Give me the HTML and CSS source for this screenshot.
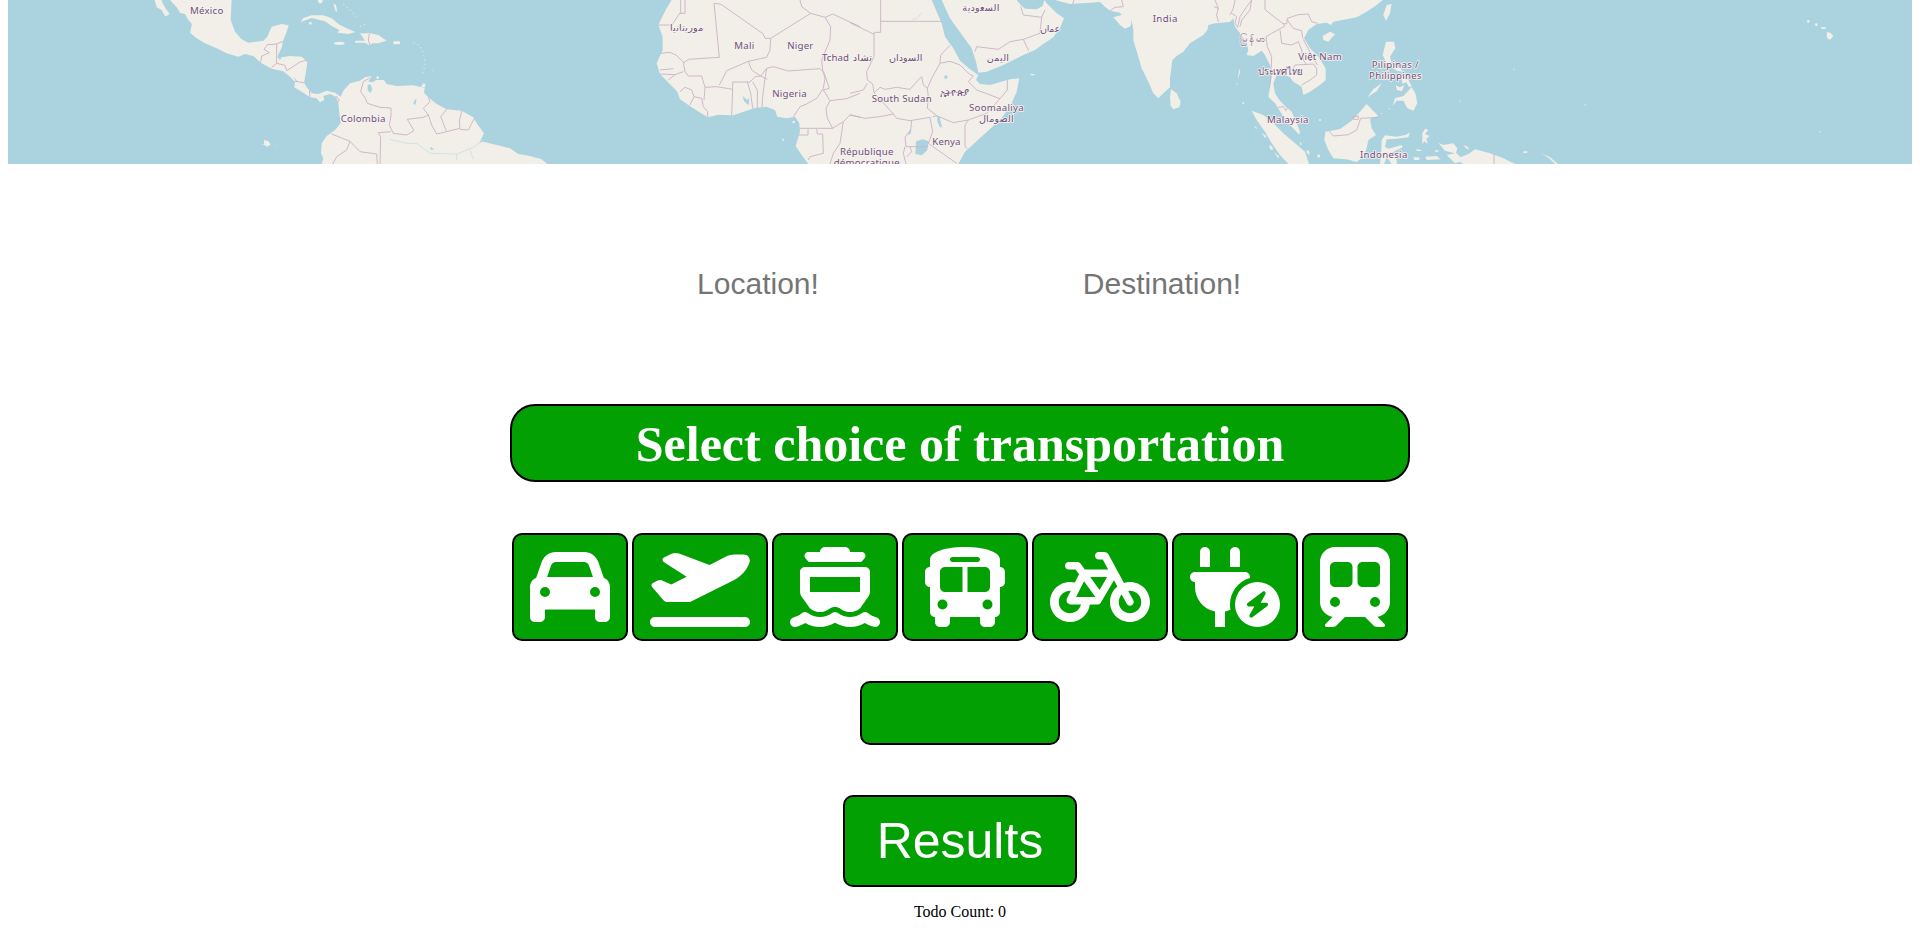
FILE: index.html
```
<!DOCTYPE html>
<html lang="en">
<head>
<meta charset="utf-8">
<title>Trip planner</title>
<link rel="stylesheet" href="styles.css">
</head>
<body>
<svg class="map" viewBox="24 0 5712 492" role="img" aria-label="World map">
  <!-- land masses -->
  <g class="land">
    <g transform="translate(390 0)">
      <path d="M74 0L80 22 95 30 105 48 115 46 118 40 110 30 98 10 95 0Z"/>
      <path d="M120 0L140 22 150 38 165 42 175 60 186 72 180 98 200 115 225 130 260 145 290 160 325 170 345 162 370 168 392 188 425 206 460 214 480 230 495 246 493 262 520 278 540 292 560 295 570 307 583 300 580 288 600 282 618 290 625 310 628 340 632 370 615 390 590 408 575 430 573 460 580 475 575 492H1252L1235 478 1200 468 1165 462 1140 445 1100 435 1060 425 1048 428 1062 400 1040 370 1030 352 995 332 950 328 920 312 895 292 882 278 884 264 850 256 800 258 770 252 762 240 738 240 730 246 715 245 724 228 705 232 690 242 660 250 640 272 632 290 615 278 590 272 565 282 545 280 530 262 522 248 528 215 532 185 515 170 480 168 455 172 450 180 442 170 456 140 458 125 470 95 476 76 455 72 425 80 412 110 400 122 355 128 335 118 315 95 302 60 305 0Z"/>
      <path d="M512 66L520 54 545 46 580 46 605 55 625 72 650 85 676 96 655 102 622 98 628 90 605 78 585 64 560 58 545 54Z"/>
      <path d="M690 100L720 100 745 105 770 122 745 130 728 130 718 136 705 128 675 128 675 122 705 122Z"/>
      <ellipse cx="628" cy="130" rx="16" ry="5"/><rect x="790" y="124" width="20" height="9" rx="3"/>
      <path d="M563 0h16l-4 10h-8zM610 10l8 6 4 20-6-4zM402 420l14 4 6 10-12 6-8-6zM880 250l6 2v10h-14z"/>
      <circle cx="541" cy="70" r="4"/><circle cx="743" cy="233" r="4"/><circle cx="398" cy="433" r="2"/>
      <path class="chain" d="M640 12L660 30 680 50M690 80L715 68M850 128L870 138 880 160 886 190 878 225M908 210v2M436 434v2"/>
    </g>
    <g transform="translate(1920 0)">
      <path d="M95 0L78 28 62 60 55 75 68 110 68 150 55 178 50 190 60 222 80 242 112 275 120 298 155 322 203 352 235 344 280 346 320 332 345 324 380 320 405 330 412 350 440 355 465 350 478 370 480 395 467 438 485 465 505 492H955L975 455 1030 405 1080 360 1110 320 1130 275 1138 235 1110 238 1050 255 1020 252 1008 240 1015 225 990 208 960 182 940 145 915 110 905 70 875 0Z"/>
      <circle cx="430" cy="419" r="3"/><circle cx="461" cy="366" r="4"/>
    </g>
    <g transform="translate(2550 0)">
      <path d="M275 0L300 55 340 110 365 145 378 185 385 218 410 215 460 195 520 165 555 150 580 132 610 112 632 80 642 55 620 40 605 25 590 10 583 0 578 18 560 28 525 26 512 15 500 0Z"/>
      <path d="M540 221l16 2-10 4z"/>
    </g>
    <g transform="translate(3210 0)">
      <path d="M-45 0L0 12 60 8 90 6 105 20 120 32 150 38 155 45 130 52 150 75 165 86 182 78 185 60 190 90 190 120 205 170 215 205 235 245 250 280 265 295 280 280 300 262 300 235 307 180 320 168 340 155 360 130 400 105 412 90 415 75 435 70 480 66 490 55 495 80 510 100 530 130 535 150 530 165 550 168 575 152 585 165 600 195 605 230 600 260 595 290 615 310 625 325 640 350 665 380 688 404 690 395 680 370 665 335 645 318 628 300 615 280 610 250 620 225 640 222 660 232 670 245 695 260 700 285 720 275 750 255 767 240 767 205 745 170 720 145 702 115 715 90 740 72 770 68 783 75 790 65 860 52 890 35 920 15 938 0Z"/>
      <path d="M303 268L320 280 332 305 328 322 310 328 302 318 300 290Z"/>
      <path d="M552 378l10 6-4 2zM575 398l14 10-4 6zM598 435l10 6 0 10-8-4zM612 456l16 14-4 4zM508 205l2 12-7 24z"/>
      <circle cx="520" cy="310" r="3"/><circle cx="500" cy="252" r="2"/>
    </g>
    <g transform="translate(3690 0)">
      <path d="M65 332L100 345 130 370 160 400 195 430 225 455 237 492H175L150 465 125 430 105 395 80 360Z"/>
      <path d="M297 394L330 387 365 362 390 335 410 312 445 348 420 356 425 385 438 405 415 420 410 445 400 470 380 486 350 478 310 475 295 450 283 420 286 395Z"/>
      <path d="M455 420L465 406 500 410 525 405 540 398 535 412 500 416 470 418 465 440 475 446 515 435 518 442 485 458 500 480 500 492H485L470 470 462 492H450L453 465Z"/>
      <path d="M468 125L492 125 496 145 480 170 485 190 510 205 520 215 500 212 470 190 458 165Z"/>
      <path d="M488 318L495 295 520 288 545 262 556 280 562 310 550 332 532 325 520 302 500 302Z"/>
      <path d="M412 292L430 268 455 250 440 274ZM515 235l20 4 10 20-8 2-8-14-12 4zM497 256l12 6 14-6-8 18-14-4zM470 15L485 12 480 40 468 62 460 45Z"/>
      <path d="M278 108L300 95 315 103 295 125 280 120ZM577 400l8-14 10 4-10 12 14 6-10 8 4 16-10-8-6 8zM550 472l18 0 0 8-16 0zM585 470l36-2 10 10-40 2zM230 450l8 4 0 12-8-8zM262 464h8v8h-8zM210 425l6 8-6 2zM560 448l14 2v3h-14z"/>
      <circle cx="270" cy="360" r="3"/><circle cx="478" cy="326" r="2"/><circle cx="455" cy="340" r="2"/>
    </g>
    <g transform="translate(4200 0)">
      <path d="M115 428L130 435 160 430 172 445 168 458 182 472 205 462 225 448 270 460 310 475 345 492H190L180 485 165 490 150 475 140 465 165 460 135 452Z"/>
      <path d="M424 460L450 472 474 492H466L446 474ZM190 435l14 6 4 8-10-4zM370 454h12v5h-12zM105 451h10v4h-10zM1281 96l10 2 9 10-8 10h-8l-4-10z"/>
      <circle cx="1225" cy="64" r="4"/><circle cx="1249" cy="74" r="4"/><ellipse cx="1270" cy="84" rx="8" ry="3"/>
      <circle cx="342" cy="208" r="2"/><circle cx="179" cy="303" r="2"/><circle cx="1259" cy="395" r="2"/><circle cx="556" cy="314" r="2"/>
    </g>
  </g>

  <!-- lakes and rivers -->
  <g class="lake">
    <path d="M1103 255l8-2 6 14-6 12-8-8zM1244 300l6-4-4 18-6-2zM1294 440l8 10-12-2z"/>
    <path d="M2748 424l20-6 18 6-4 26-16 16-20-4zM2812 350l6 0 8 32-6 0-8-18zM2832 228l9-2 2 8-8 4zM2728 392l6-4-2 14-8 2zM2228 288l14 12 6-6-2 22-14-12z"/>
    <path d="M879 230l16 16-6 0z"/>
  </g>
  <path class="river" d="M1170 418L1220 430 1250 430 1290 460 1370 462 1420 442 1450 420M1370 462v20M1410 450l10 28M2736 58l14-2 16-18"/>

  <!-- country borders -->
  <g class="border">
    <path transform="translate(390 0)" d="M392 188L395 168 418 158 402 148 412 134 440 132V190L425 202M440 132L458 124M440 190L465 196 470 212 510 186 532 180M495 244L522 248M540 292L538 272M618 288L628 300 622 308M718 234L700 245 692 275 706 295 712 310 750 322 783 324V345L778 375 790 400 830 405 852 392 832 358 880 352 895 345 880 325 900 305 895 292M895 345L905 375 920 402 950 395 940 370 932 350 950 328M950 395L990 385 988 365 995 332M990 388L1015 390 1033 355M783 395L745 398 752 410 750 492M605 402L660 424 690 455 740 462 742 492M660 424L650 450 620 470 608 492M718 102L715 120 720 135"/>
    <path transform="translate(1920 0)" d="M55 75H95L118 42 122 38V0M135 0V40H118M222 10L240 12 245 14 370 102 375 115H392L512 40M222 10L238 172 145 178 132 188 108 165 90 157 62 160M480 0L485 20 512 40 555 52 578 42 660 80M555 52L572 80 570 120 545 180 548 210M392 115L390 150 380 172 325 184 260 212 238 255M325 184L335 210 362 228 380 205 400 200 445 213 510 208 540 206 552 218M130 188L135 215 145 228 185 228 195 262 230 260 278 268V246H330L345 230 362 228M380 205L375 235 368 290 366 322M278 268L275 345M322 246L332 280 338 325M338 246L352 270V324M362 228L382 238M60 222L105 224 130 215M60 210L100 206M105 224L85 240M120 275L135 262 155 270 162 290 150 315M162 290L185 295 190 320 203 335V352M195 262L192 300M548 210L555 235 550 265 530 295 500 312 480 320 460 350M552 218L568 265 550 270 570 302 620 296 660 280M570 302L558 325 562 355 578 385H480M475 405L504 405V388M530 388L532 402 548 402 550 460 510 470 505 480M578 385L610 365 600 430 580 460 570 492M610 365L630 345 660 352"/>
    <path transform="translate(2550 0)" d="M92 0V97H72V170L50 215 52 240 68 252 72 278M92 64H278M0 68L72 103M0 280L40 270 52 250M72 278L90 262 105 268 140 262 180 268 205 240 215 230 220 255 232 265M232 265L245 235 270 190 272 165 300 136M270 190L300 184 330 195 358 222M358 222L370 228 355 245 380 270 450 296 472 270V240M450 296L410 340 355 360 310 368 262 348 232 325 235 290 232 265M0 344L45 355 90 350 130 342 72 278M130 342L140 355 180 362 240 352M355 360L345 375V440L352 446M240 352L248 395 235 430 320 490M185 362L182 390 165 412 168 440H235M165 440L160 460 168 492M180 440L185 455 170 470M262 348L248 350M375 155L380 140 445 148 480 125 520 118 570 100 575 52 585 30M575 52L520 45 512 20M520 118L536 152"/>
    <path transform="translate(3210 0)" d="M12 0L8 12M120 32L135 22 160 20 155 0M435 0L445 25 440 45 445 66M445 25L432 20M480 45L490 25 495 0M485 40L500 50 495 70 503 82 510 50 530 20 545 0"/>
    <path transform="translate(3690 0)" d="M30 80L35 60 60 30 65 0M105 0V28L125 45 158 70 165 78 125 100 108 110 112 140 125 170 122 235 118 265M158 70L170 72 172 55 205 44 235 42 245 65 262 70M172 60L190 85 215 92 218 115M150 90L155 130 185 135 205 125 215 150 220 180 230 195M190 205L195 195 250 192 260 205V225L240 240 215 255M220 118L245 165 262 195M145 322L160 320 168 332 172 322M298 394L310 408 355 404 380 390 392 355 445 352M367 352L385 348V358H370Z"/>
    <path transform="translate(4200 0)" d="M282 462V492"/>
  </g>

  <!-- country names -->
  <g class="label">
    <text x="570" y="43" textLength="100">México</text>
    <text x="1022" y="366" textLength="134">Colombia</text>
    <text x="2010" y="92" class="native" textLength="100">موريتانيا</text>
    <text x="2203" y="147" textLength="60">Mali</text>
    <text x="2362" y="147" textLength="78">Niger</text>
    <text x="2466" y="182" textLength="81">Tchad</text>
    <text x="2558" y="182" class="native" textLength="58">تشاد</text>
    <text x="2667" y="182" class="native" textLength="100">السودان</text>
    <text x="2317" y="290" textLength="103">Nigeria</text>
    <text x="2615" y="307" textLength="180">South Sudan</text>
    <text x="2819" y="287" class="native" textLength="87">ኢትዮጵያ</text>
    <text x="2907" y="333" textLength="164">Soomaaliya</text>
    <text x="2937" y="366" class="native" textLength="104">الصومال</text>
    <text x="2887" y="32" class="native" textLength="111">السعودية</text>
    <text x="2960" y="182" class="native" textLength="67">اليمن</text>
    <text x="3120" y="97" class="native" textLength="61">عمان</text>
    <text x="2797" y="436" textLength="84">Kenya</text>
    <text x="2520" y="465" textLength="160">République</text>
    <text x="2501" y="498" textLength="198">démocratique</text>
    <text x="3458" y="67" textLength="74">India</text>
    <text x="3720" y="127" class="native" textLength="76">မြန်မာ</text>
    <text x="3775" y="224" class="native" textLength="135">ประเทศไทย</text>
    <text x="3895" y="179" textLength="130">Việt Nam</text>
    <text x="3801" y="370" textLength="124">Malaysia</text>
    <text x="4115" y="203" textLength="141">Pilipinas /</text>
    <text x="4107" y="237" textLength="158">Philippines</text>
    <text x="4080" y="473" textLength="142">Indonesia</text>
  </g>
</svg>

<main class="planner">
  <div class="places">
    <input class="place" type="text" placeholder="Location!" aria-label="Location">
    <input class="place" type="text" placeholder="Destination!" aria-label="Destination">
  </div>

  <h1 class="banner">Select choice of transportation</h1>

  <div class="modes">
    <button class="mode" aria-label="Car"><svg class="icon" viewBox="0 0 512 512"><path d="M135.2 117.4L109.1 192H402.9l-26.1-74.6C372.3 104.6 360.2 96 346.6 96H165.4c-13.6 0-25.7 8.6-30.2 21.4zM39.6 196.8L74.8 96.3C88.3 57.8 124.6 32 165.4 32H346.6c40.8 0 77.1 25.8 90.6 64.3l35.2 100.5c23.2 9.6 39.6 32.5 39.6 59.2V448c0 17.7-14.3 32-32 32H448c-17.7 0-32-14.3-32-32V400H96v48c0 17.7-14.3 32-32 32H32c-17.7 0-32-14.3-32-32V256c0-26.7 16.4-49.6 39.6-59.2zM128 288a32 32 0 1 0 -64 0 32 32 0 1 0 64 0zm288 32a32 32 0 1 0 0-64 32 32 0 1 0 0 64z"/></svg></button>
    <button class="mode" aria-label="Plane"><svg class="icon" viewBox="0 0 640 512"><path d="M381 114.9L186.1 41.8c-16.7-6.2-35.2-5.3-51.1 2.7L89.1 67.4C78 73 77.2 88.5 87.6 95.2l146.9 94.5L136 240 77.8 214.1c-8.7-3.9-18.8-3.7-27.3 .6L18.3 230.8c-9.3 4.7-11.8 16.8-5 24.7l73.1 85.3c6.1 7.1 15 11.2 24.3 11.2H248.4c5 0 9.9-1.2 14.3-3.4L535.6 212.2c46.5-23.3 82.5-63.3 100.8-112C645.9 75 627.2 48 600.2 48H542.4c-20.2 0-40.2 4.8-58.2 14L381 114.9zM0 480c0 17.7 14.3 32 32 32H608c17.7 0 32-14.3 32-32s-14.3-32-32-32H32c-17.7 0-32 14.3-32 32z"/></svg></button>
    <button class="mode" aria-label="Ferry"><svg class="icon" viewBox="0 0 576 512"><path d="M224 0H352c17.7 0 32 14.3 32 32h75.1c20.6 0 31.6 24.3 18.1 39.8L456 96H120L98.8 71.8C85.3 56.3 96.3 32 116.9 32H192c0-17.7 14.3-32 32-32zM96 128H480c17.7 0 32 14.3 32 32V283.5c0 13.3-4.2 26.3-11.9 37.2l-51.4 71.9c-1.9 1.1-3.7 2.2-5.5 3.5c-15.5 10.7-34 18-51 19.9H375.6c-17.1-1.8-35-9-50.8-19.9c-22.1-15.5-51.6-15.5-73.7 0c-14.8 10.2-32.5 18-50.6 19.9H183.9c-17-1.8-35.6-9.2-51-19.9c-1.8-1.3-3.7-2.4-5.6-3.5L75.9 320.7C68.2 309.8 64 296.8 64 283.5V160c0-17.7 14.3-32 32-32zm32 64v96H448V192H128zM306.5 421.9C329 437.4 356.5 448 384 448c26.9 0 55.3-10.8 77.4-26.1c11.9-8.5 28.1-7.8 39.2 1.7c14.4 11.9 32.5 21 50.6 25.2c17.2 4 27.9 21.2 23.9 38.4s-21.2 27.9-38.4 23.9c-24.5-5.7-44.9-16.5-58.2-25C449.5 501.7 417 512 384 512c-31.9 0-60.6-9.9-80.4-18.9c-5.8-2.7-11.1-5.3-15.6-7.7c-4.5 2.4-9.7 5.1-15.6 7.7c-19.8 9-48.5 18.9-80.4 18.9c-33 0-65.5-10.3-94.5-25.8c-13.4 8.4-33.7 19.3-58.2 25c-17.2 4-34.4-6.7-38.4-23.9s6.7-34.4 23.9-38.4c18.1-4.2 36.2-13.3 50.6-25.2c11.1-9.4 27.3-10.1 39.2-1.7C136.7 437.2 165.1 448 192 448c27.5 0 55-10.6 77.5-26.1c11.1-7.9 25.9-7.9 37 0z"/></svg></button>
    <button class="mode" aria-label="Bus"><svg class="icon" viewBox="0 0 576 512"><path d="M288 0C422.4 0 512 35.2 512 80V128c17.7 0 32 14.3 32 32v64c0 17.7-14.3 32-32 32V416c0 17.7-14.3 32-32 32v32c0 17.7-14.3 32-32 32H416c-17.7 0-32-14.3-32-32V448H192v32c0 17.7-14.3 32-32 32H128c-17.7 0-32-14.3-32-32V448c-17.7 0-32-14.3-32-32V256c-17.7 0-32-14.3-32-32V160c0-17.7 14.3-32 32-32V80C64 35.2 153.6 0 288 0zM128 160v96c0 17.7 14.3 32 32 32H272V128H160c-17.7 0-32 14.3-32 32zM304 288H416c17.7 0 32-14.3 32-32V160c0-17.7-14.3-32-32-32H304V288zM144 400a32 32 0 1 0 0-64 32 32 0 1 0 0 64zm288 0a32 32 0 1 0 0-64 32 32 0 1 0 0 64zM384 80c0-8.8-7.2-16-16-16H208c-8.8 0-16 7.2-16 16s7.2 16 16 16H368c8.8 0 16-7.2 16-16z"/></svg></button>
    <button class="mode" aria-label="Bicycle"><svg class="icon" viewBox="0 0 640 512"><path d="M312 32c-13.3 0-24 10.7-24 24s10.7 24 24 24h25.7l34.6 64H222.9l-27.4-38C191 99.7 183.7 96 176 96H120c-13.3 0-24 10.7-24 24s10.7 24 24 24h43.7l22.1 30.7-26.6 53.1c-10-2.5-20.5-3.8-31.2-3.8C57.3 224 0 281.3 0 352s57.3 128 128 128c65.3 0 119.1-48.9 127-112h49c8.5 0 16.3-4.5 20.7-11.8l84.8-143.5 21.7 40.1C402.4 276.3 384 312 384 352c0 70.7 57.3 128 128 128s128-57.3 128-128s-57.3-128-128-128c-13.5 0-26.5 2.1-38.7 6L375.4 48.8C369.8 38.4 359 32 347.2 32H312zM458.6 303.7l32.3 59.7c6.3 11.7 20.9 16 32.5 9.7s16-20.9 9.7-32.5l-32.3-59.7c3.6-.6 7.4-.9 11.2-.9c39.8 0 72 32.2 72 72s-32.2 72-72 72s-72-32.2-72-72c0-18.6 7-35.5 18.6-48.3zM133.2 368h65c-7.3 32.1-36 56-70.2 56c-39.8 0-72-32.2-72-72s32.2-72 72-72c1.7 0 3.4 .1 5.1 .2l-24.2 48.5c-9 18.1 4.1 39.4 24.3 39.4zm33.7-48l50.7-101.3 72.9 101.2-.1 .1H166.8zm90.6-128H365.9L317 274.8 257.4 192z"/></svg></button>
    <button class="mode" aria-label="Electric"><svg class="icon" viewBox="0 0 576 512"><path d="M96 0C78.3 0 64 14.3 64 32v96h64V32c0-17.7-14.3-32-32-32zM288 0c-17.7 0-32 14.3-32 32v96h64V32c0-17.7-14.3-32-32-32zM32 160c-17.7 0-32 14.3-32 32s14.3 32 32 32v32c0 77.4 55 142 128 156.8V512h64V412.8c12.3-2.5 24.1-6.4 35.1-11.5c-2.1-10.8-3.1-21.9-3.1-33.3c0-80.3 53.8-148 127.3-169.2c.5-2.2 .7-4.5 .7-6.8c0-17.7-14.3-32-32-32H32zM432 512a144 144 0 1 0 0-288 144 144 0 1 0 0 288zm47.9-225c4.3 3.7 5.4 9.9 2.6 14.9L452.4 356H488c5.2 0 9.8 3.3 11.4 8.2s-.1 10.3-4.2 13.4l-96 72c-4.5 3.4-10.8 3.2-15.1-.6s-5.4-9.9-2.6-14.9L411.6 380H376c-5.2 0-9.8-3.3-11.4-8.2s.1-10.3 4.2-13.4l96-72c4.5-3.4 10.8-3.2 15.1 .6z"/></svg></button>
    <button class="mode" aria-label="Train"><svg class="icon" viewBox="0 0 448 512"><path d="M96 0C43 0 0 43 0 96V352c0 48 35.2 87.7 81.1 94.9l-46 46C28.1 499.9 33.1 512 43 512H82.7c8.5 0 16.6-3.4 22.6-9.4L160 448H288l54.6 54.6c6 6 14.1 9.4 22.6 9.4H405c10 0 15-12.1 7.9-19.1l-46-46c46-7.1 81.1-46.9 81.1-94.9V96c0-53-43-96-96-96H96zM64 128c0-17.7 14.3-32 32-32h80c17.7 0 32 14.3 32 32v96c0 17.7-14.3 32-32 32H96c-17.7 0-32-14.3-32-32V128zM272 96h80c17.7 0 32 14.3 32 32v96c0 17.7-14.3 32-32 32H272c-17.7 0-32-14.3-32-32V128c0-17.7 14.3-32 32-32zM64 352a32 32 0 1 1 64 0 32 32 0 1 1 -64 0zm288-32a32 32 0 1 1 0 64 32 32 0 1 1 0-64z"/></svg></button>
  </div>

  <div class="chosen"></div>
  <button class="results">Results</button>
  <p class="count">Todo Count: 0</p>
</main>
</body>
</html>
```

FILE: styles.css
```
* { box-sizing: border-box; }

body {
  margin: 0 8px;
  background: #fff;
  font-family: "Liberation Serif", "Times New Roman", serif;
  font-size: 16px;
}

.map {
  display: block;
  width: 1904px;
  height: 164px;
  background: #aad3df;
  overflow: hidden;
}
.land { fill: #f2efe9; }
.chain {
  fill: none;
  stroke: #d3e2e3;
  stroke-width: 4;
  stroke-dasharray: 4 9;
}
.lake { fill: #aad3df; }
.river { fill: none; stroke: #c9dfe2; stroke-width: 2.5; }
.border {
  fill: none;
  stroke: #cbb4c6;
  stroke-width: 2.8;
  stroke-linejoin: round;
}
.label {
  fill: #6f4f79;
  stroke: #f6f2f0;
  stroke-width: 5;
  stroke-linejoin: round;
  paint-order: stroke;
  font-family: "Noto Sans", "DejaVu Sans", sans-serif;
  font-size: 29px;
}
.native { font-family: "DejaVu Sans", sans-serif; }

.planner {
  display: flex;
  flex-direction: column;
  align-items: center;
}

.places {
  display: flex;
  gap: 4px;
  margin-top: 85px;
}
.place {
  width: 400px;
  height: 70px;
  padding: 0;
  border: 0;
  outline: 0;
  background: transparent;
  font: 30px "Liberation Sans", Arial, sans-serif;
  text-align: center;
}
.place::placeholder { color: #757575; opacity: 1; }

.banner {
  width: 900px;
  height: 78px;
  margin: 85px 0 0;
  border: 2px solid #000;
  border-radius: 25px;
  background: #02a002;
  color: #fff;
  font-size: 50px;
  line-height: 76px;
  text-align: center;
}

.modes {
  display: flex;
  gap: 4px;
  margin-top: 51px;
}
.mode {
  padding: 12px 16px;
  border: 2px solid #000;
  border-radius: 10px;
  background: #02a002;
}
.icon {
  display: block;
  height: 80px;
  fill: #fff;
  fill-rule: evenodd;
}

.chosen {
  width: 200px;
  height: 64px;
  margin-top: 40px;
  border: 2px solid #000;
  border-radius: 10px;
  background: #02a002;
}

.results {
  width: 234px;
  height: 92px;
  margin-top: 50px;
  padding: 0;
  border: 2px solid #000;
  border-radius: 10px;
  background: #02a002;
  color: #fff;
  font: 50px "Liberation Sans", Arial, sans-serif;
}

.count {
  margin: 16px 0 0;
  line-height: 18px;
}
```
